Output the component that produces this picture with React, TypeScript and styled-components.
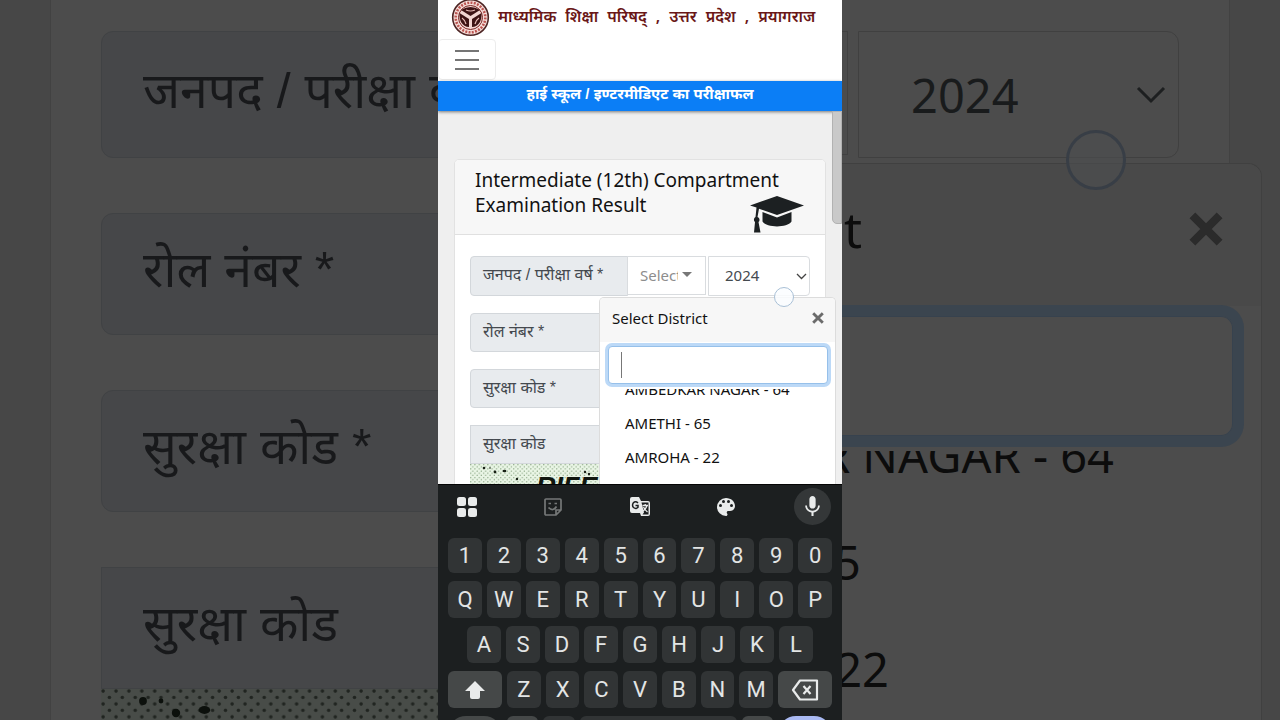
import React from "react";
import styled, { createGlobalStyle, css } from "styled-components";

const Global = createGlobalStyle`
  *, *::before, *::after { box-sizing: border-box; }
  body { margin: 0; font-family: "Noto Sans", "Open Sans", "Liberation Sans", sans-serif; background: #484848; }
  h1, h2, p, ul { margin: 0; padding: 0; font-weight: 400; }
  ul { list-style: none; }
  button, input, select { font: inherit; color: inherit; }
`;

const Stage = styled.div`
  display: grid;
  grid-template-columns: minmax(0, 1fr);
  grid-template-rows: 100vh;
  overflow: hidden;
`;

const hindi = css`
  font-family: "Liberation Sans", "Noto Sans", sans-serif;
`;

/* ---------- dimmed enlargement behind the phone ---------- */

const Backdrop = styled.div`
  grid-area: 1 / 1;
  position: relative;
  overflow: hidden;
  background: #474747;
  padding: 0 50px;
`;

const BackCard = styled.div`
  min-height: 100%;
  background: #4c4c4c;
  border: solid #424242;
  border-width: 0 1px;
  padding: 31px 50px 0;
  display: flex;
  flex-direction: column;
`;

const BackRow = styled.div`
  display: flex;
  margin-bottom: 55px;
`;

const BackLabel = styled.div<{ $tall?: boolean; $square?: boolean }>`
  ${hindi}
  flex: 0 0 500px;
  height: ${(p) => (p.$tall ? 127 : 122)}px;
  padding: 0 41px 8px;
  display: flex;
  align-items: center;
  background: #464749;
  border: 1px solid #404244;
  border-radius: ${(p) => (p.$square ? "0" : "12px 0 0 12px")};
  color: #18191b;
  font-size: 50px;
  line-height: 80px;
  white-space: nowrap;
`;

const BackSelect = styled.div`
  flex: 1;
  height: 124px;
  border: 1px solid #414141;
  margin-right: 10px;
`;

const BackYear = styled.div`
  flex: 0 0 321px;
  height: 127px;
  border: 1px solid #404040;
  border-radius: 0 12px 12px 0;
  padding: 0 12px 0 52px;
  display: flex;
  align-items: center;
  justify-content: space-between;
  color: #191b1c;
  font-size: 47px;
`;

const BackCaptcha = styled.div`
  flex: 1;
  margin-top: -55px;
  background: #484c48;
  overflow: hidden;
`;

const BackModal = styled.div`
  position: absolute;
  top: 163px;
  right: 18px;
  bottom: 0;
  left: calc(50% + 202px);
  background: #4c4c4c;
  border: 1px solid #404040;
  border-width: 1px 1px 0 0;
  border-radius: 0 14px 0 0;
  overflow: hidden;
  color: #0c0c0c;
`;

const BackModalHead = styled.div`
  height: 142px;
  padding: 0 38px 12px 2px;
  background: #494949;
  display: flex;
  align-items: center;
  justify-content: space-between;
  font-size: 50px;
  svg { color: #2b2b2b; }
`;

const BackInput = styled.div`
  margin: 10px 28px 15px 0;
  height: 120px;
  border: 1px solid #37424e;
  border-left: 0;
  border-radius: 0 12px 12px 0;
  box-shadow: 0 0 0 11px #3b454f;
`;

const BackList = styled.ul`
  overflow: hidden;
`;

const BackOption = styled.li<{ $end: number }>`
  width: ${(p) => p.$end}px;
  height: 107px;
  display: flex;
  justify-content: flex-end;
  line-height: 107px;
  font-size: 47px;
  white-space: nowrap;
  &:first-child { margin-top: -49px; }
`;

const BackTouch = styled.div`
  position: absolute;
  top: 130px;
  right: 154px;
  width: 60px;
  height: 60px;
  border: 3px solid #383e46;
  border-radius: 50%;
  background: rgba(76, 78, 80, 0.6);
`;

/* ---------- phone ---------- */

const Phone = styled.main`
  grid-area: 1 / 1;
  position: relative;
  justify-self: center;
  width: 404px;
  max-width: 100%;
  height: 100vh;
  display: flex;
  flex-direction: column;
  background: #efefef;
  color: #111;
  overflow: hidden;
`;

const Site = styled.div`
  position: relative;
  flex: 1;
  min-height: 0;
  display: flex;
  flex-direction: column;
  overflow: hidden;
`;

const Masthead = styled.header`
  flex: none;
  background: #fff;
`;

const Brand = styled.div`
  height: 39px;
  padding-left: 13px;
  display: flex;
  align-items: flex-start;
  gap: 8px;
  svg { display: block; flex: none; }
`;

const BrandName = styled.p`
  display: flex;
  gap: 9px;
  color: #6a1717;
  font-size: 16px;
  line-height: 32px;
  font-weight: 600;
  white-space: nowrap;
`;

const MenuButton = styled.button`
  width: 58px;
  height: 41px;
  padding: 0 16px;
  display: flex;
  flex-direction: column;
  justify-content: center;
  gap: 7px;
  background: #fff;
  border: 1px solid #ececec;
  border-radius: 4px;
  span { height: 2px; background: #757575; }
`;

const Banner = styled.h1`
  ${hindi}
  position: relative;
  height: 30px;
  margin-top: 1px;
  background: #0b7ef6;
  color: #fff;
  text-align: center;
  font-size: 15px;
  line-height: 26px;
  font-weight: 700;
  box-shadow: 0 1px 3px rgba(0, 0, 0, 0.5);
`;

const Body = styled.div`
  flex: 1;
  min-height: 0;
  padding: 48px 16px 0;
`;

const Scrollbar = styled.div`
  position: absolute;
  top: 111px;
  right: 0;
  width: 10px;
  height: 113px;
  background: #c9c9c9;
  border: 1px solid #b2b2b2;
  border-radius: 0 0 0 5px;
`;

const Card = styled.section`
  background: #fff;
  border: 1px solid #e2e2e2;
  border-radius: 5px;
`;

const CardHead = styled.div`
  position: relative;
  height: 75px;
  padding: 8px 20px;
  background: #f7f7f7;
  border-bottom: 1px solid #e0e0e0;
  border-radius: 4px 4px 0 0;
  h2 {
    font-size: 19px;
    line-height: 25px;
  }
  svg {
    position: absolute;
    right: 20px;
    bottom: 0;
  }
`;

const Form = styled.form`
  padding: 21px 15px 0;
  display: flex;
  flex-direction: column;
`;

const Row = styled.div<{ $last?: boolean }>`
  display: flex;
  margin-bottom: ${(p) => (p.$last ? 0 : 17)}px;
`;

const Label = styled.label<{ $tall?: boolean; $square?: boolean }>`
  ${hindi}
  flex: 0 0 158px;
  height: ${(p) => (p.$tall ? 40 : 39)}px;
  padding: 0 12px 2px;
  display: flex;
  align-items: center;
  background: #e8ebee;
  border: 1px solid #d3d7db;
  border-radius: ${(p) => (p.$square ? "0" : "4px 0 0 4px")};
  color: #44494e;
  font-size: 16px;
  line-height: 24px;
  white-space: nowrap;
`;

const control = css`
  background: #fff;
  border: 1px solid #d9dcdf;
`;

const DistrictButton = styled.button`
  ${control}
  flex: 0 0 79px;
  height: 39px;
  margin: 0 2px 0 -1px;
  padding: 0 13px 2px 12px;
  display: flex;
  align-items: center;
  justify-content: space-between;
  color: #8d8d8d;
  font-size: 15px;
  span { width: 38px; overflow: hidden; text-align: left; }
  i {
    border: 5px solid transparent;
    border-top-color: #777;
    border-bottom: 0;
  }
`;

const YearField = styled.div`
  position: relative;
  flex: 1;
  svg {
    position: absolute;
    right: 3px;
    top: 17px;
    pointer-events: none;
  }
`;

const YearSelect = styled.select`
  ${control}
  appearance: none;
  width: 100%;
  height: 40px;
  padding: 0 16px 2px;
  border-radius: 0 4px 4px 0;
  color: #444a4f;
  font-size: 15px;
`;

const TextField = styled.input`
  ${control}
  flex: 1;
  min-width: 0;
  border-left: 0;
  border-radius: 0 4px 4px 0;
`;

const Captcha = styled.div`
  height: 60px;
  svg { display: block; }
`;

const Picker = styled.section`
  position: absolute;
  top: 297px;
  right: 6px;
  bottom: 0;
  width: 237px;
  display: flex;
  flex-direction: column;
  background: #fff;
  border: 1px solid #dcdcdc;
  border-bottom: 0;
  border-radius: 5px 5px 0 0;
`;

const PickerHead = styled.div`
  height: 44px;
  padding: 0 11px 4px 12px;
  display: flex;
  align-items: center;
  justify-content: space-between;
  background: #f7f7f7;
  border-radius: 4px 4px 0 0;
  font-size: 15px;
`;

const CloseButton = styled.button`
  border: 0;
  padding: 0;
  background: none;
  display: flex;
  color: #6b6b6b;
`;

const SearchBox = styled.div`
  position: relative;
  margin: 4px 7px 5px 8px;
  &::after {
    content: "";
    position: absolute;
    left: 13px;
    top: 6px;
    width: 1px;
    height: 26px;
    background: #777;
  }
`;

const Search = styled.input`
  display: block;
  width: 100%;
  height: 38px;
  padding: 0 12px;
  border: 1px solid #96c0ea;
  border-radius: 4px;
  outline: none;
  box-shadow: 0 0 0 3px #bcd9f7;
  background: #fff;
`;

const Options = styled.ul`
  flex: 1;
  min-height: 0;
  overflow: hidden;
  li {
    height: 34px;
    line-height: 34px;
    padding-left: 25px;
    font-size: 15px;
  }
  li:first-child { margin-top: -17px; }
`;

const Touch = styled.div`
  position: absolute;
  top: 287px;
  right: 48px;
  width: 20px;
  height: 20px;
  border: 1px solid #a9c0d6;
  border-radius: 50%;
  background: rgba(250, 253, 255, 0.85);
`;

/* ---------- keyboard ---------- */

const Keyboard = styled.div`
  flex: none;
  padding: 3px 10px 0;
  background: #1c1f20;
  border-top: 1px solid #050505;
  display: flex;
  flex-direction: column;
  gap: 8px;
  color: #e3e5e5;
`;

const Tools = styled.div`
  height: 37px;
  margin-bottom: 5px;
  padding-right: 1px;
  display: flex;
  justify-content: space-between;
  align-items: center;
`;

const Tool = styled.button<{ $round?: boolean }>`
  width: 37px;
  height: 37px;
  padding: 0;
  border: 0;
  border-radius: 50%;
  display: flex;
  align-items: center;
  justify-content: center;
  background: ${(p) => (p.$round ? "#343738" : "none")};
`;

const Keys = styled.div<{ $inset?: boolean; $cut?: boolean }>`
  display: flex;
  gap: 5px;
  padding: 0 ${(p) => (p.$inset ? 19 : 0)}px;
  ${(p) => p.$cut && "height: 4px; overflow: hidden;"}
`;

const Key = styled.button<{ $short?: boolean; $wide?: boolean; $tone?: string; $grow?: number; $pill?: boolean }>`
  flex: ${(p) => (p.$wide ? "0 0 54px" : `${p.$grow ?? 1} 1 0`)};
  min-width: 0;
  height: ${(p) => (p.$short ? 35 : 37)}px;
  padding: 0;
  border: 0;
  border-radius: ${(p) => (p.$pill ? 18 : 6)}px;
  background: ${(p) => p.$tone ?? "#313435"};
  display: flex;
  align-items: center;
  justify-content: center;
  font-family: Roboto, "Liberation Sans", sans-serif;
  font-size: 22px;
  line-height: 26px;
`;

const Emblem = () => (
  <svg width="39" height="37" viewBox="0 0 39 37" aria-hidden="true">
    <circle cx="19.500" cy="17.500" r="17.800" fill="#f6dfdb" stroke="#4d2524" strokeWidth="1.600" />
    <circle cx="19.500" cy="17.500" r="14.800" fill="none" stroke="#bb5551" strokeWidth="2.600" strokeDasharray="2 1.300" />
    <circle cx="19.500" cy="17.500" r="12" fill="#f3d6d2" stroke="#7a2523" strokeWidth="1" />
    <path d="M10 10Q19.500 4 29 10L19.500 16Z" fill="#3d1314" />
    <path d="M8.500 13L18 19V27Q13 27 10 22Q8 18 8.500 13Z" fill="#3d1314" />
    <path d="M30.500 13L21 19V27Q26 27 29 22Q31 18 30.500 13Z" fill="#3d1314" />
    <path d="M11 18Q14 20 15 24M28 18Q25 20 24 24M15 10Q19.500 12 24 10" fill="none" stroke="#e8bdb8" strokeWidth="1.200" />
  </svg>
);

const Cap = () => (
  <svg width="56" height="39" viewBox="0 0 56 39" fill="#1c2022" aria-hidden="true">
    <path d="M28 1L55 10.500L28 20L10 13.700L8.500 22C11 23 11 26 9.500 27L11.500 37.500H5L6 27C4.500 26 4.500 23 6.500 22L7.500 12.500L1 10.500Z" />
    <path d="M13.500 17L28 22.500L42.500 17V26.500C38 33 18 33 13.500 26.500Z" />
  </svg>
);

const Cross = ({ size }: { size: number }) => (
  <svg width={size} height={size} viewBox="0 0 10 10" aria-hidden="true">
    <path d="M1 1L9 9M9 1L1 9" stroke="currentColor" strokeWidth="2.400" />
  </svg>
);

const Noise = ({ scale, dim }: { scale: number; dim?: boolean }) => (
  <svg width="100%" height="100%" aria-hidden="true">
    <defs>
      <pattern id={dim ? "noise-dim" : "noise"} width="4.300" height="4.300" patternUnits="userSpaceOnUse" patternTransform={`scale(${scale})`}>
        <circle cx="0.700" cy="0.700" r="0.600" fill={dim ? "#202420" : "#6f8f69"} />
        <circle cx="2.800" cy="2.800" r="0.600" fill={dim ? "#202420" : "#6f8f69"} />
      </pattern>
    </defs>
    <rect width="100%" height="100%" fill={dim ? "#484c48" : "#e9f5e5"} />
    <rect width="100%" height="100%" fill={`url(#${dim ? "noise-dim" : "noise"})`} />
    <g fill={dim ? "#0c100c" : "#182015"} transform={`scale(${scale})`}>
      <circle cx="14" cy="4" r="1.300" />
      <circle cx="25" cy="8" r="1.400" />
      <ellipse cx="34.500" cy="7" rx="1.900" ry="1.300" />
      <circle cx="47" cy="15" r="1.200" />
      <circle cx="20" cy="4" r="0.800" />
      <circle cx="115" cy="8" r="1.200" />
      <circle cx="119" cy="10" r="1.200" />
    </g>
    {!dim && (
      <text x="66" y="32" fontFamily="Liberation Sans, sans-serif" fontSize="27" fontWeight="700" fontStyle="italic" fill="#10160e">
        RIFE
      </text>
    )}
  </svg>
);

const BRAND_WORDS = ["माध्यमिक", "शिक्षा", "परिषद्", ",", "उत्तर", "प्रदेश", ",", "प्रयागराज"];

export default function App() {
  return (
    <>
      <Global />
      <Stage>
        <Backdrop aria-hidden="true">
          <BackCard>
            <BackRow>
              <BackLabel $tall>जनपद / परीक्षा व</BackLabel>
              <BackSelect />
              <BackYear>
                2024
                <svg width="30" height="18" viewBox="0 0 30 18">
                  <path d="M2 2L15 15L28 2" fill="none" stroke="#1d1f20" strokeWidth="3" />
                </svg>
              </BackYear>
            </BackRow>
            <BackRow><BackLabel>रोल नंबर *</BackLabel></BackRow>
            <BackRow><BackLabel>सुरक्षा कोड *</BackLabel></BackRow>
            <BackRow><BackLabel $square>सुरक्षा कोड</BackLabel></BackRow>
            <BackCaptcha><Noise scale={3} dim /></BackCaptcha>
          </BackCard>
          <BackModal>
            <BackModalHead>
              t
              <Cross size={34} />
            </BackModalHead>
            <BackInput />
            <BackList>
              <BackOption $end={272}>R NAGAR - 64</BackOption>
              <BackOption $end={19}>5</BackOption>
              <BackOption $end={47}>22</BackOption>
            </BackList>
          </BackModal>
          <BackTouch />
        </Backdrop>

        <Phone>
          <Site>
            <Masthead>
              <Brand>
                <Emblem />
                <BrandName>{BRAND_WORDS.map((word, i) => <span key={i}>{word}</span>)}</BrandName>
              </Brand>
              <MenuButton aria-label="Menu"><span /><span /><span /></MenuButton>
              <Banner>हाई स्कूल / इण्टरमीडिएट का परीक्षाफल</Banner>
            </Masthead>
            <Body>
              <Card>
                <CardHead>
                  <h2>Intermediate (12th) Compartment<br />Examination Result</h2>
                  <Cap />
                </CardHead>
                <Form>
                  <Row>
                    <Label $tall htmlFor="year">जनपद / परीक्षा वर्ष *</Label>
                    <DistrictButton type="button"><span>Select</span><i /></DistrictButton>
                    <YearField>
                      <YearSelect id="year" defaultValue="2024"><option>2024</option></YearSelect>
                      <svg width="11" height="7" viewBox="0 0 11 7" aria-hidden="true">
                        <path d="M1 1L5.500 5.500L10 1" fill="none" stroke="#444" strokeWidth="1.300" />
                      </svg>
                    </YearField>
                  </Row>
                  <Row><Label htmlFor="roll">रोल नंबर *</Label><TextField id="roll" /></Row>
                  <Row><Label htmlFor="code">सुरक्षा कोड *</Label><TextField id="code" /></Row>
                  <Row $last><Label $square as="div">सुरक्षा कोड</Label></Row>
                  <Captcha><Noise scale={1} /></Captcha>
                </Form>
              </Card>
            </Body>
            <Scrollbar />
            <Picker>
              <PickerHead>
                Select District
                <CloseButton aria-label="Close"><Cross size={12} /></CloseButton>
              </PickerHead>
              <SearchBox><Search aria-label="Search district" /></SearchBox>
              <Options>
                <li>AMBEDKAR NAGAR - 64</li>
                <li>AMETHI - 65</li>
                <li>AMROHA - 22</li>
              </Options>
            </Picker>
            <Touch />
          </Site>

          <Keyboard>
            <Tools>
              <Tool aria-label="Apps">
                <svg width="20" height="20" viewBox="0 0 20 20" fill="#e9ebeb">
                  <rect width="9" height="9" rx="2.500" /><rect x="11" width="9" height="9" rx="2.500" />
                  <rect y="11" width="9" height="9" rx="2.500" /><rect x="11" y="11" width="9" height="9" rx="2.500" />
                </svg>
              </Tool>
              <Tool aria-label="Stickers">
                <svg width="18" height="18" viewBox="0 0 18 18" fill="none" stroke="#757878" strokeWidth="1.700">
                  <path d="M2 1H16Q17 1 17 2V12L12 17H2Q1 17 1 16V2Q1 1 2 1ZM17 12H12V17M4.500 9.500Q9 14 12.500 8.500M4.500 5.500H7M10.500 5.500H13" />
                </svg>
              </Tool>
              <Tool aria-label="Translate">
                <svg width="20" height="20" viewBox="0 0 20 20">
                  <path d="M2 0H9L11 4H18Q20 4 20 6V17Q20 19 18 19H11L10 16H2Q0 16 0 14V2Q0 0 2 0Z" fill="#e9ebeb" />
                  <path d="M11.500 5.500H18.500V17.500H12.500L14 15.500Z" fill="#1c1f20" />
                  <path d="M8 6Q5.500 3.500 3.200 6Q1.800 8.500 3.500 10.500Q6 12.500 8 10.300V8.500H5.500" fill="none" stroke="#1c1f20" strokeWidth="1.500" />
                  <path d="M12.500 8.500H18M15.200 7V8.500M17 8.500Q16 12 13 14M13.500 10Q15 13 17.500 15" fill="none" stroke="#e9ebeb" strokeWidth="1.300" />
                </svg>
              </Tool>
              <Tool aria-label="Themes">
                <svg width="24" height="24" viewBox="0 0 24 24">
                  <path fill="#e9ebeb" d="M12 3a9 9 0 0 0 0 18c.83 0 1.500-.67 1.500-1.500 0-.39-.15-.74-.39-1.010-.23-.26-.38-.61-.38-.99 0-.83.67-1.500 1.500-1.500H16c2.760 0 5-2.240 5-5 0-4.420-4.030-8-9-8zm-5.500 9a1.500 1.500 0 1 1 0-3 1.500 1.500 0 0 1 0 3zm3-4a1.500 1.500 0 1 1 0-3 1.500 1.500 0 0 1 0 3zm5 0a1.500 1.500 0 1 1 0-3 1.500 1.500 0 0 1 0 3zm3 4a1.500 1.500 0 1 1 0-3 1.500 1.500 0 0 1 0 3z" />
                </svg>
              </Tool>
              <Tool $round aria-label="Voice input">
                <svg width="25" height="25" viewBox="0 0 24 24" fill="#e9ebeb">
                  <path d="M12 14c1.660 0 3-1.340 3-3V5c0-1.660-1.340-3-3-3S9 3.340 9 5v6c0 1.660 1.340 3 3 3zm5.300-3c0 3-2.540 5.100-5.300 5.100S6.700 14 6.700 11H5c0 3.410 2.720 6.230 6 6.720V21h2v-3.280c3.280-.48 6-3.300 6-6.720h-1.700z" />
                </svg>
              </Tool>
            </Tools>
            <Keys>{[..."1234567890"].map((k) => <Key $short key={k}>{k}</Key>)}</Keys>
            <Keys>{[..."QWERTYUIOP"].map((k) => <Key key={k}>{k}</Key>)}</Keys>
            <Keys $inset>{[..."ASDFGHJKL"].map((k) => <Key key={k}>{k}</Key>)}</Keys>
            <Keys>
              <Key $wide $tone="#454848" aria-label="Shift">
                <svg width="20" height="18" viewBox="0 0 20 18" fill="#e9ebeb"><path d="M10 0L20 10H15V16Q15 18 13 18H7Q5 18 5 16V10H0Z" /></svg>
              </Key>
              {[..."ZXCVBNM"].map((k) => <Key key={k}>{k}</Key>)}
              <Key $wide $tone="#454848" aria-label="Backspace">
                <svg width="28" height="22" viewBox="0 0 28 22" fill="none" stroke="#e9ebeb" strokeWidth="2.200">
                  <path d="M9 1.500H26V20.500H9L2 11ZM12.500 7L19.500 15M19.500 7L12.500 15" strokeLinejoin="round" />
                </svg>
              </Key>
            </Keys>
            <Keys $cut>
              <Key $wide $pill $tone="#454848" aria-label="Symbols" />
              <Key $tone="#454848" aria-label="Comma" />
              <Key aria-label="Emoji" />
              <Key $grow={5} aria-label="Space" />
              <Key $tone="#454848" aria-label="Period" />
              <Key $wide $pill $tone="#a9b9f2" aria-label="Enter" />
            </Keys>
          </Keyboard>
        </Phone>
      </Stage>
    </>
  );
}
